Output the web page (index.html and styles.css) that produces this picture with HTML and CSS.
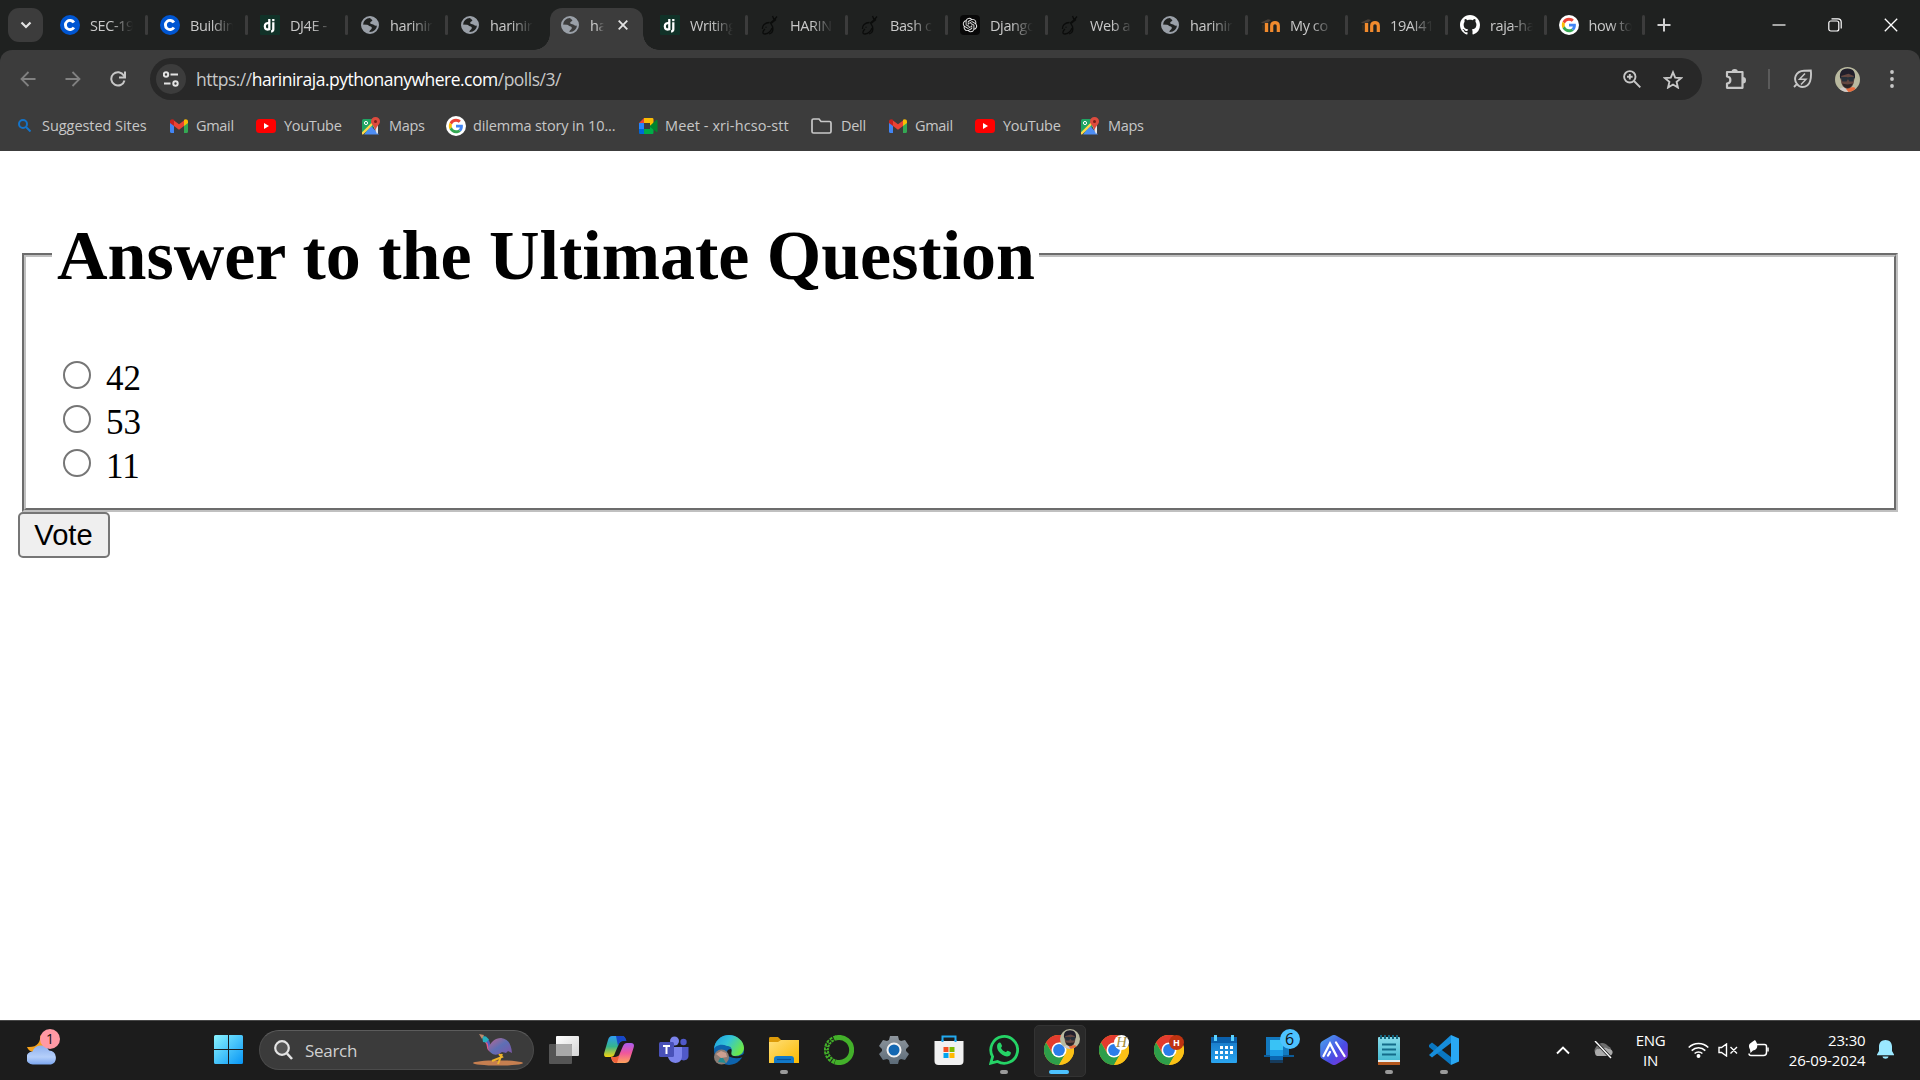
FILE: index.html
```html
<!DOCTYPE html>
<html lang="en">
<head>
<meta charset="utf-8">
<title>Polls</title>
<link rel="stylesheet" href="styles.css">
</head>
<body>
<svg class="sprite" aria-hidden="true">
  <defs>
    <linearGradient id="gWin" x1="0" y1="0" x2="1" y2="1"><stop offset="0" stop-color="#8af4ff"/><stop offset="1" stop-color="#0795f5"/></linearGradient>
    <linearGradient id="gCloud" x1="0" y1="0" x2="0" y2="1"><stop offset="0" stop-color="#8eb0ee"/><stop offset=".6" stop-color="#b5cffa"/><stop offset="1" stop-color="#7ca7f0"/></linearGradient>
    <linearGradient id="gCopA" x1="0" y1="0" x2="0" y2="1"><stop offset="0" stop-color="#2f9cf4"/><stop offset=".5" stop-color="#35b58d"/><stop offset="1" stop-color="#f8d30c"/></linearGradient>
    <linearGradient id="gCopB" x1="0" y1="0" x2="0" y2="1"><stop offset="0" stop-color="#a95cf0"/><stop offset=".5" stop-color="#f0569c"/><stop offset="1" stop-color="#ffa45c"/></linearGradient>
    <linearGradient id="gEdge" x1="0" y1="0" x2="1" y2=".5"><stop offset="0" stop-color="#1c9be0"/><stop offset=".5" stop-color="#33c4d8"/><stop offset="1" stop-color="#6be74a"/></linearGradient>
    <linearGradient id="gFold" x1="0" y1="0" x2="1" y2="1"><stop offset="0" stop-color="#ffdf79"/><stop offset="1" stop-color="#fbb900"/></linearGradient>
    <linearGradient id="gHex" x1="0" y1="0" x2="1" y2="1"><stop offset="0" stop-color="#48a8ee"/><stop offset=".6" stop-color="#4b4be4"/><stop offset="1" stop-color="#8a2fd8"/></linearGradient>
    <linearGradient id="gBird" x1="0" y1="0" x2="1" y2="1"><stop offset="0" stop-color="#c0668f"/><stop offset=".5" stop-color="#5d6fb5"/><stop offset="1" stop-color="#8054a6"/></linearGradient>
    <linearGradient id="gNote" x1="0" y1="0" x2="0" y2="1"><stop offset="0" stop-color="#86dbe9"/><stop offset="1" stop-color="#3db6cf"/></linearGradient>
    <linearGradient id="gCal" x1="0" y1="0" x2="0" y2="1"><stop offset="0" stop-color="#1673c2"/><stop offset="1" stop-color="#2aa5f0"/></linearGradient>
    <linearGradient id="gGear" x1="0" y1="0" x2="0" y2="1"><stop offset="0" stop-color="#8e969d"/><stop offset="1" stop-color="#5c6b78"/></linearGradient>
    <linearGradient id="gTask" x1="0" y1="0" x2="1" y2="1"><stop offset="0" stop-color="#fff"/><stop offset="1" stop-color="#d5d5d5"/></linearGradient>
    <linearGradient id="gMoodle" x1="0" y1="0" x2="1" y2="0"><stop offset="0" stop-color="#f18a2d" stop-opacity=".15"/><stop offset="1" stop-color="#f18a2d"/></linearGradient>
  </defs>
  <symbol id="coursera" viewBox="0 0 20 20"><circle cx="10" cy="10" r="10" fill="#0056d2"/><path d="M13.9 7.5A4.6 4.6 0 1 0 13.9 12.5" fill="none" stroke="#fff" stroke-width="2.9"/></symbol>
  <symbol id="django" viewBox="0 0 20 20"><rect width="20" height="20" rx="1" fill="#113228"/><g fill="none" stroke="#fff" stroke-width="2.3"><path d="M9.3 4v10.2C7 15 4.8 14.3 4.8 11.3S7 7.600 9.300 8.400M13.300 7.300v7c0 1.600-.8 2.100-2.200 2.300"/></g><rect x="12.150" y="4" width="2.300" height="2.200" fill="#fff"/></symbol>
  <symbol id="globe" viewBox="0 0 20 20"><circle cx="10" cy="10" r="8" fill="none" stroke="#9aa0a8" stroke-width="2"/><path d="M10.500 1.800C14 1.500 18 5 18.200 9.500c-1 1.500-3.200 1.800-4.200.5-.8-1.200-2.500-.5-3.500-1.300C9.500 7.500 11 6.500 12 6c1-.7-.5-1.700-1.500-2zM2 9.500l5 .2c1.500 0 1.800 1.300 3 1.600 2 .2 2.500 2 1 3.200-1.500.8-1.500 2-2 3.500C5 18 1.500 14 2 9.500z" fill="#9aa0a8"/></symbol>
  <symbol id="doodle" viewBox="0 0 20 20"><g fill="none" stroke="#0b0c0b" stroke-width="1.300"><path d="M9.500 7.500C5 7.500 2 10.500 2.500 14M9 19c3-1 4.500-4 3.500-7.500L10.500 8l4-3.500 2.500-3M14 4.500L12.500 1M11 8.500l5-4M5.500 12l1 .5M12 13c-1 3-4 5.500-7 6-3 0-2.500-3 0-5"/></g></symbol>
  <symbol id="openai" viewBox="0 0 20 20"><rect width="20" height="20" rx="4" fill="#080808"/><g transform="translate(2.800 2.800) scale(.6)"><path fill="#e8e8e8" d="M22.282 9.821a5.985 5.985 0 0 0-.516-4.910 6.046 6.046 0 0 0-6.510-2.900A6.065 6.065 0 0 0 4.981 4.182a5.985 5.985 0 0 0-3.998 2.900 6.046 6.046 0 0 0 .743 7.097 5.980 5.980 0 0 0 .510 4.911 6.051 6.051 0 0 0 6.515 2.900A5.985 5.985 0 0 0 13.260 24a6.056 6.056 0 0 0 5.772-4.206 5.990 5.990 0 0 0 3.997-2.900 6.056 6.056 0 0 0-.747-7.073zM13.260 22.430a4.476 4.476 0 0 1-2.876-1.040l.141-.081 4.779-2.758a.795.795 0 0 0 .392-.681v-6.737l2.020 1.168a.071.071 0 0 1 .038.052v5.583a4.504 4.504 0 0 1-4.494 4.494zM3.600 18.304a4.470 4.470 0 0 1-.535-3.014l.142.085 4.783 2.759a.771.771 0 0 0 .780 0l5.843-3.369v2.332a.080.080 0 0 1-.033.062L9.740 19.950a4.500 4.500 0 0 1-6.140-1.646zM2.340 7.896a4.485 4.485 0 0 1 2.366-1.973V11.600a.766.766 0 0 0 .388.677l5.815 3.355-2.020 1.168a.076.076 0 0 1-.071 0l-4.830-2.786A4.504 4.504 0 0 1 2.340 7.872zm16.597 3.855l-5.833-3.387L15.119 7.200a.076.076 0 0 1 .071 0l4.830 2.791a4.494 4.494 0 0 1-.676 8.105v-5.678a.790.790 0 0 0-.407-.667zm2.010-3.023l-.141-.085-4.774-2.782a.776.776 0 0 0-.785 0L9.409 9.230V6.897a.066.066 0 0 1 .028-.061l4.830-2.787a4.500 4.500 0 0 1 6.680 4.660zm-12.640 4.135l-2.020-1.164a.080.080 0 0 1-.038-.057V6.075a4.500 4.500 0 0 1 7.375-3.453l-.142.080L8.704 5.460a.795.795 0 0 0-.393.681zm1.097-2.365l2.602-1.500 2.607 1.500v2.999l-2.597 1.500-2.607-1.500z"/></g></symbol>
  <symbol id="moodle" viewBox="0 0 20 20"><path d="M3 15.500V10" stroke="#f18a2d" stroke-opacity=".2" stroke-width="1"/><path d="M6.500 17V8" stroke="#f18a2d" stroke-width="3.400"/><path d="M11.700 17v-6.300c0-4.200 6.600-4.200 6.600 0V17" fill="none" stroke="#f18a2d" stroke-width="3.200"/><path d="M1 7.500l7-3.200 3 .7-3 2.500-6 .8z" fill="#4a4039"/></symbol>
  <symbol id="github" viewBox="0 0 16 16"><path fill="#fff" d="M8 0C3.580 0 0 3.580 0 8c0 3.540 2.290 6.530 5.470 7.590.4.070.55-.17.55-.38 0-.19-.01-.82-.01-1.490-2.010.37-2.530-.49-2.690-.94-.09-.23-.48-.94-.82-1.130-.28-.15-.68-.52-.01-.53.63-.01 1.080.58 1.230.82.72 1.210 1.870.87 2.330.66.07-.52.28-.87.51-1.070-1.780-.2-3.640-.89-3.640-3.950 0-.87.31-1.590.82-2.150-.08-.2-.36-1.020.08-2.120 0 0 .67-.21 2.200.82.64-.18 1.320-.27 2-.27s1.360.09 2 .27c1.530-1.040 2.200-.82 2.200-.82.44 1.100.16 1.920.08 2.120.51.56.82 1.270.82 2.150 0 3.070-1.870 3.750-3.650 3.950.29.25.54.73.54 1.480 0 1.070-.01 1.930-.01 2.200 0 .21.15.46.55.38A8.010 8.010 0 0 0 16 8c0-4.420-3.580-8-8-8z"/></symbol>
  <symbol id="google" viewBox="0 0 20 20"><circle cx="10" cy="10" r="10" fill="#fff"/><g transform="translate(2.800 2.800) scale(.3)"><path fill="#EA4335" d="M24 9.500c3.540 0 6.710 1.220 9.210 3.600l6.850-6.850C35.900 2.380 30.470 0 24 0 14.620 0 6.510 5.380 2.560 13.220l7.980 6.190C12.430 13.720 17.740 9.500 24 9.500z"/><path fill="#4285F4" d="M46.980 24.550c0-1.570-.15-3.090-.38-4.550H24v9.020h12.940c-.58 2.960-2.260 5.480-4.780 7.180l7.730 6c4.510-4.180 7.090-10.360 7.090-17.650z"/><path fill="#FBBC05" d="M10.530 28.590c-.48-1.450-.76-2.990-.76-4.590s.27-3.140.76-4.590l-7.980-6.190C.92 16.460 0 20.120 0 24s.92 7.540 2.560 10.780z"/><path fill="#34A853" d="M24 48c6.480 0 11.930-2.130 15.890-5.810l-7.730-6c-2.150 1.450-4.920 2.300-8.160 2.300-6.260 0-11.570-4.220-13.470-9.910l-7.980 6.190C6.510 42.620 14.620 48 24 48z"/></g></symbol>
  <symbol id="gmail" viewBox="0 0 18 14"><path fill="#4285f4" d="M0 2.500V12.700c0 .7.500 1.200 1.200 1.200H4V6z"/><path fill="#34a853" d="M14 6v7.900h2.800c.7 0 1.200-.5 1.200-1.200V2.500z"/><path fill="#ea4335" d="M4 1.500l5 3.700 5-3.700V7L9 10.800 4 7z"/><path fill="#c5221f" d="M0 2.500C0 .2 2.500-.5 4 .8V7L0 4z"/><path fill="#fbbc04" d="M18 2.500C18 .2 15.500-.5 14 .8V7l4-3z"/></symbol>
  <symbol id="youtube" viewBox="0 0 20 14"><rect width="20" height="14" rx="3.500" fill="#f00"/><path d="M8 4v6l5-3z" fill="#fff"/></symbol>
  <symbol id="maps" viewBox="0 0 18 18"><path fill="#1fa463" d="M2 2h10v8l-5 4-7 3V3.500C0 2.500 1 2 2 2z"/><path fill="#4d8df5" d="M9 9l8 8.500H2z"/><path fill="#e4e6e8" d="M11 8l5-1v9l-1 1z"/><path d="M0 17L13 4" stroke="#ffd84a" stroke-width="2.400"/><circle cx="4" cy="6" r="1.600" fill="none" stroke="#fff"/><path fill="#dd4b3e" d="M13.500 0C16 0 18 1.800 18 4.300c0 3.200-3.500 4.700-4.500 9.200-1-4.500-4.500-6-4.500-9.200C9 1.800 11 0 13.500 0z"/><circle cx="13.500" cy="4.400" r="1.500" fill="#7b1f18"/></symbol>
  <symbol id="meet" viewBox="0 0 19 16"><path fill="#ea4335" d="M0 5l5-5v5z"/><path fill="#fbbc04" d="M5 0h8c1 0 1.500.5 1.500 1.500V6L11 8V5H5z"/><path fill="#2684fc" d="M0 5h5v6H0z"/><path fill="#0066da" d="M0 11h5v5H1.500C.500 16 0 15.500 0 14.500z"/><path fill="#00ac47" d="M5 11h6V8l3.500-3v9.500c0 1-.5 1.500-1.500 1.500H5z"/><path fill="#00832d" d="M11 8l3.500-3.500L17.500 2c.5-.5 1-.2 1 .5v11c0 .7-.5 1-1 .5L11 9z"/></symbol>
  <symbol id="chrome" viewBox="0 0 30 30"><circle cx="15" cy="15" r="15" fill="#fbc116"/><path fill="#e33b2e" d="M2 7.500A15 15 0 0 1 28 7.500H15v7.500L9 19z"/><path fill="#2d9e4a" d="M2 7.500A15 15 0 0 0 15 30l6.500-11.200L15 21 8.500 18.800z"/><path fill="#fbc116" d="M15 7.500h13A15 15 0 0 1 15 30l6.500-11.250z"/><circle cx="15" cy="15" r="7.500" fill="#fff"/><circle cx="15" cy="15" r="5.900" fill="#2b7de9"/></symbol>
  <symbol id="face" viewBox="0 0 26 26"><clipPath id="faceClip"><circle cx="13" cy="13" r="13"/></clipPath><g clip-path="url(#faceClip)"><rect width="26" height="26" fill="#b9b99f"/><path d="M11 26l1-5 8 0 4 5z" fill="#e96b3c"/><path d="M3 26c1-4 4-5 7-5l4 5z" fill="#cfcac7"/><ellipse cx="13" cy="13" rx="7" ry="9.500" fill="#644740"/><path d="M5.500 13C4 5 7 1.500 13 1.500s9 4 7.500 11.500L19 9l-5-2-7 2z" fill="#211f2b"/><path d="M6 10.500h6.500l1 .5 1-.5H20l-1 4.500h-4l-1.500-2.500L12 15H7.500z" fill="#28313a"/><path d="M7.500 17c1 6.500 10 6.500 11 0-2 1.500-9 1.500-11 0z" fill="#2c2526"/></g></symbol>
</svg>

<header class="browser">
  <nav class="tabs">
    <button class="tab-search" aria-label="Search tabs"><svg width="12" height="8" viewBox="0 0 12 8"><path d="M1.500 1.500L6 6l4.500-4.500" fill="none" stroke="#e3e3e3" stroke-width="2.200"/></svg></button>
    <div class="tab"><svg class="fav"><use href="#coursera"/></svg><span>SEC-19</span></div>
    <div class="tab"><svg class="fav"><use href="#coursera"/></svg><span>Buildin</span></div>
    <div class="tab"><svg class="fav"><use href="#django"/></svg><span>DJ4E -</span></div>
    <div class="tab"><svg class="fav"><use href="#globe"/></svg><span>harinir</span></div>
    <div class="tab nosep"><svg class="fav"><use href="#globe"/></svg><span>harinir</span></div>
    <div class="tab active"><svg class="fav"><use href="#globe"/></svg><span>ha</span><svg class="close" viewBox="0 0 10 10"><path d="M.7.7l8.600 8.600M9.300.7L.7 9.300" stroke="#e3e3e3" stroke-width="1.800"/></svg></div>
    <div class="tab"><svg class="fav"><use href="#django"/></svg><span>Writing</span></div>
    <div class="tab"><svg class="fav"><use href="#doodle"/></svg><span>HARIN</span></div>
    <div class="tab"><svg class="fav"><use href="#doodle"/></svg><span>Bash c</span></div>
    <div class="tab"><svg class="fav"><use href="#openai"/></svg><span>Django</span></div>
    <div class="tab"><svg class="fav"><use href="#doodle"/></svg><span>Web a</span></div>
    <div class="tab"><svg class="fav"><use href="#globe"/></svg><span>harinir</span></div>
    <div class="tab"><svg class="fav"><use href="#moodle"/></svg><span>My co</span></div>
    <div class="tab"><svg class="fav"><use href="#moodle"/></svg><span>19AI41</span></div>
    <div class="tab slim"><svg class="fav"><use href="#github"/></svg><span>raja-ha</span></div>
    <div class="tab slim"><svg class="fav"><use href="#google"/></svg><span>how to</span></div>
    <svg class="plus" viewBox="0 0 14 14"><path d="M7 .5v13M.5 7h13" stroke="#d0d0d0" stroke-width="2"/></svg>
    <div class="window-controls">
      <svg width="14" height="14" viewBox="0 0 14 14"><path d="M.5 7h13" stroke="#fff" stroke-width="1.200"/></svg>
      <svg width="14" height="14" viewBox="0 0 14 14" fill="none" stroke="#fff" stroke-width="1.200"><rect x=".8" y="3" width="10" height="10" rx="2"/><path d="M3.500.8H10c2 0 3.200 1.200 3.200 3.200v6.500"/></svg>
      <svg width="14" height="14" viewBox="0 0 14 14"><path d="M.8.8l12.400 12.400M13.200.8L.8 13.200" stroke="#fff" stroke-width="1.300"/></svg>
    </div>
  </nav>

  <div class="toolbar">
    <div class="nav-buttons">
      <svg width="16" height="16" viewBox="0 0 16 16" fill="none" stroke="#818181" stroke-width="1.800"><path d="M15.500 8H1.500M8.500 1L1.500 8l7 7"/></svg>
      <svg width="16" height="16" viewBox="0 0 16 16" fill="none" stroke="#818181" stroke-width="1.800"><path d="M.5 8h14M7.500 1l7 7-7 7"/></svg>
      <svg width="16" height="16" viewBox="0 0 16 16" fill="none" stroke="#c7c7c7" stroke-width="2"><path d="M14.500 9.500A6.700 6.700 0 1 1 13.800 4.500L15 6M15 .5v6H9"/></svg>
    </div>
    <div class="omnibox">
      <span class="site-info"><svg width="16" height="16" viewBox="0 0 16 16" fill="none" stroke="#e3e3e3" stroke-width="2"><circle cx="3" cy="3.500" r="2.200"/><path d="M7.500 3.500H15M1 12.500h6.500"/><circle cx="12.500" cy="12.500" r="2.200"/></svg></span>
      <span class="url">https://<b>hariniraja.pythonanywhere.com</b>/polls/3/</span>
      <svg class="lens" width="18" height="18" viewBox="0 0 18 18" fill="none" stroke="#c7c7c7" stroke-width="1.900"><circle cx="6.800" cy="6.800" r="5.700"/><path d="M11 11l6.300 6.300M6.800 4v5.600M4 6.800h5.600"/></svg>
      <svg width="20" height="19" viewBox="0 0 20 19" fill="none" stroke="#c7c7c7" stroke-width="1.900"><path d="M10 2.300l2.200 5.300 5.800.5-4.400 3.800 1.300 5.600L10 14.500l-4.900 3 1.300-5.600L2 8.100l5.800-.5z"/></svg>
    </div>
    <div class="tool-actions">
      <svg class="puzzle" width="22" height="21" viewBox="0 0 22 21"><path fill="none" stroke="#c7c7c7" stroke-width="2.200" stroke-linejoin="round" d="M2 3h15.500v15.800H2v-4.300c4.500-.3 4.500-6.700 0-7z"/><path fill="#c7c7c7" d="M6.500 3a3.200 3 0 0 1 6.400 0zM18 8a3 3.200 0 0 1 0 6.400z"/></svg>
      <i class="divider"></i>
      <svg class="leaf" width="20" height="20" viewBox="0 0 20 20" fill="none" stroke="#c7c7c7" stroke-width="1.900"><path d="M1 18l3-3C0 10 2.500 2 11 1.700L17.800 1.500C18.500 8 18 18 9.500 18 7 18 5 16.500 4 15"/><path d="M12 4.500L6.500 10.300H13L8 15.500" stroke-width="1.500"/></svg>
      <svg class="avatar"><use href="#face"/></svg>
      <svg class="kebab" width="4" height="18" viewBox="0 0 4 18" fill="#c7c7c7"><circle cx="2" cy="2" r="1.900"/><circle cx="2" cy="9" r="1.900"/><circle cx="2" cy="16" r="1.900"/></svg>
    </div>
  </div>

  <div class="bookmarks">
    <div class="bm b1"><svg width="13" height="13" viewBox="0 0 13 13" fill="none" stroke="#1473c8" stroke-width="2"><circle cx="5" cy="5" r="4"/><path d="M8 8l4.500 4.500"/></svg><span>Suggested Sites</span></div>
    <div class="bm b2"><svg width="18" height="14"><use href="#gmail"/></svg><span>Gmail</span></div>
    <div class="bm b3"><svg width="20" height="14"><use href="#youtube"/></svg><span>YouTube</span></div>
    <div class="bm b4"><svg width="18" height="18"><use href="#maps"/></svg><span>Maps</span></div>
    <div class="bm b5"><svg width="20" height="20"><use href="#google"/></svg><span>dilemma story in 10...</span></div>
    <div class="bm b6"><svg width="19" height="16"><use href="#meet"/></svg><span>Meet - xri-hcso-stt</span></div>
    <div class="bm b7"><svg width="21" height="16" viewBox="0 0 21 16" fill="none" stroke="#c7c7c7" stroke-width="1.700"><path d="M1 13.500V2.500C1 1.500 1.500 1 2.500 1H8l2 2.500h8.500c1 0 1.500.5 1.500 1.500v8.500c0 1-.5 1.500-1.500 1.500h-16C1.500 15 1 14.500 1 13.500z"/></svg><span>Dell</span></div>
    <div class="bm b8"><svg width="18" height="14"><use href="#gmail"/></svg><span>Gmail</span></div>
    <div class="bm b9"><svg width="20" height="14"><use href="#youtube"/></svg><span>YouTube</span></div>
    <div class="bm b10"><svg width="18" height="18"><use href="#maps"/></svg><span>Maps</span></div>
  </div>
</header>

<main class="page">
  <form>
    <fieldset class="poll">
      <legend><h1>Answer to the Ultimate Question</h1></legend>
      <label class="choice"><input type="radio" name="choice"><span>42</span></label>
      <label class="choice"><input type="radio" name="choice"><span>53</span></label>
      <label class="choice"><input type="radio" name="choice"><span>11</span></label>
    </fieldset>
    <button class="vote" type="button">Vote</button>
  </form>
</main>

<footer class="taskbar">
  <div class="weather">
    <svg width="30" height="30" viewBox="0 0 30 30"><path d="M13 0c1 7-3 13-13 12 1 3 4 5 8 5l9-4V5z" fill="#f5a21c"/><path d="M6 29.500a6.500 6.500 0 0 1-.5-13A9 9 0 0 1 22 15.500a7.200 7.200 0 0 1 2 14z" fill="url(#gCloud)"/></svg>
    <span class="badge pink">1</span>
  </div>
  <svg class="start" width="30" height="30" viewBox="0 0 30 30"><path fill="url(#gWin)" d="M1.500 0H14v14H0V1.500Q0 0 1.500 0zM15 0h12.500Q29 0 29 1.500V14H15zM0 15h14v14H1.500Q0 29 0 27.500zM15 15h14v12.500Q29 29 27.500 29H15z"/></svg>
  <div class="search">
    <svg width="19" height="20" viewBox="0 0 19 20" fill="none" stroke="#e4e4e4" stroke-width="2.200"><circle cx="8" cy="8" r="6.800" fill="#555"/><path d="M13 13.500l5 5.500" stroke-width="2.600"/></svg>
    <span>Search</span>
    <svg class="bird" width="50" height="32" viewBox="0 0 50 32"><ellipse cx="25" cy="29" rx="25" ry="2.600" fill="#c67f50"/><path d="M26 20l3 3-10 4M29 20l-4 10" stroke="#efb52b" stroke-width="2" fill="none"/><path d="M13 6c5 2 0 8 6 11" stroke="#4c63c4" stroke-width="3" fill="none"/><path d="M12.500 8c4 3 0 7 5 9" stroke="#e05a8b" stroke-width="1.500" fill="none"/><path d="M15 14C18 8 22 4 28 4c7 1 10 5 11 15l-4-2-2 2-4-1c-5 4-11 4-14-4z" fill="url(#gBird)"/><path d="M9 2l4 .5 3 3-3 3-3-.5z" fill="#25aebd"/><path d="M6 0l5 1-2 4z" fill="#bd8a6b"/></svg>
  </div>
  <div class="apps">
    <div class="app"><svg viewBox="0 0 30 30"><rect x="7" y="1" width="23" height="20" rx="1" fill="url(#gTask)"/><rect y="9" width="23" height="20" rx="1" fill="#555"/><path d="M7 9h15a1 1 0 0 1 1 1v11H7z" fill="#a9a9a9"/></svg></div>
    <div class="app"><svg viewBox="0 0 30 30"><path fill="url(#gCopA)" d="M8 1h9c3 0 4 1 5 5h-3c-3 0-4 2-5 5l-3 7c-1 3-2 4-5 4H3c-3 0-3.500-2-2.500-5L4 5C5 2 6 1 8 1z"/><path fill="#1747c8" d="M12 1h6c2 0 3.500 1 4.500 5H19c-2 0-4 1.500-5 5z"/><path fill="url(#gCopB)" d="M23 8h4c3 0 3.500 2 2.500 5L26 24c-1 3-3 4-5 4h-9c-3 0-4-2-5-6h4c3 0 4-1 5-4l3-7c1-2 2-3 4-3z"/><path fill="#ef6039" d="M7 22h4c3 0 4-1 5-4l-3 10c-3 0-5-2-6-6z"/></svg></div>
    <div class="app"><svg viewBox="0 0 30 30"><circle cx="15.500" cy="6" r="4.500" fill="#7b83eb"/><circle cx="24.500" cy="7" r="3.200" fill="#5059c9"/><path fill="#5059c9" d="M21 12h8.500v9c0 4-5 6-8.500 3z"/><path fill="#7b83eb" d="M9 12h14v9c0 9-12 9-14 1z"/><rect y="7" width="15" height="15" rx="1.500" fill="#4951b8"/><path d="M4 11h7M7.500 11v8" stroke="#fff" stroke-width="2"/></svg></div>
    <div class="app"><svg viewBox="0 0 30 30"><circle cx="15" cy="15" r="15" fill="#0d63ad"/><path fill="url(#gEdge)" d="M0 15C0 6 7 0 15 0s15 6 15 13c0 5-4 8-9 8-4 0-5-2-4-4 2-4-1-6-4-6C7 8 0 11 0 15z"/><path fill="#1c1c1c" d="M17 14c2 2-2 6 3 7 4 1 8-1 11-3l-2 4c-8 3-17 0-16-5 0-2 2-3 4-3z"/><circle cx="7.500" cy="22" r="7.500" fill="#8b7d76"/><path d="M2 19l5-3 5 2 1 4-6 1z" fill="#cc9f90"/><path d="M4 27l2-4h3l3 5z" fill="#238b91"/></svg></div>
    <div class="app running"><svg viewBox="0 0 30 30"><path fill="#dc9a09" d="M0 3.500C0 2.500.5 2 1.500 2H9l4 4-3 6H0z"/><path fill="url(#gFold)" d="M0 7h9l3-2h18v23H0z"/><path fill="#1279c9" d="M5 24a3 3 0 0 1 3-3h14a3 3 0 0 1 3 3v4H5z"/><path d="M8 24.500h14" stroke="#07529a" stroke-width="1.200"/></svg></div>
    <div class="app"><svg viewBox="0 0 30 30" fill="none" stroke="#43b02a"><path d="M12 2.900A12.500 12.500 0 1 1 11 26.800" stroke-width="5"/><path d="M12.500 2.700A12.500 12.500 0 0 0 11.500 27" stroke-width="5" stroke-dasharray="2.800 .9"/><path d="M9 4A12.500 12.500 0 0 0 8 25.500" stroke="#1c1c1c" stroke-width="1.200" stroke-dasharray="2 1.500"/></svg></div>
    <div class="app"><svg viewBox="0 0 30 30"><path fill="url(#gGear)" d="M11 1h8l1 4 2 1 4-1 4 6-3 3v2l3 3-4 6-4-1-2 1-1 4h-8l-1-4-2-1-4 1-4-6 3-3v-2l-3-3 4-6 4 1 2-1z"/><circle cx="15" cy="15" r="6.500" fill="#1267b2" stroke="#f2f2f2" stroke-width="2"/></svg></div>
    <div class="app"><svg viewBox="0 0 30 30"><path d="M8.500 6V1.500h13V6" fill="none" stroke="#22a9ef" stroke-width="2"/><path fill="#f1f1f1" d="M.5 6h29v20a4 4 0 0 1-4 4h-21a4 4 0 0 1-4-4z"/><path d="M8.500 5v2M21.500 5v2" stroke="#22a9ef" stroke-width="2"/><path fill="#f25022" d="M9.500 12h5v5h-5z"/><path fill="#7fba00" d="M15.500 12h5v5h-5z"/><path fill="#00a4ef" d="M9.500 18h5v5h-5z"/><path fill="#ffb900" d="M15.500 18h5v5h-5z"/></svg></div>
    <div class="app running"><svg viewBox="0 0 30 30"><path d="M1.800 28.200l1.800-6.600A13.400 13.400 0 1 1 8.500 26.500z" fill="none" stroke="#25d366" stroke-width="2.800"/><path fill="#25d366" d="M9.500 8c1-1 2-.7 2.500.5l1 2.300c.3.700-1 1.700-1 2.200 1 2 2.500 3.200 4.500 4 .7.300 1.500-1.700 2.300-1.300l2.700 1.400c1 .5 0 3-1 3.700-3 2-8-.5-10.500-4C7.500 13.500 7.500 9.500 9.500 8z"/></svg></div>
    <div class="app current"><svg><use href="#chrome"/></svg><svg class="profile"><use href="#face"/></svg></div>
    <div class="app"><svg><use href="#chrome"/></svg><span class="profile-h white">H</span></div>
    <div class="app"><svg><use href="#chrome"/></svg><span class="profile-h red">H</span></div>
    <div class="app"><svg viewBox="0 0 30 30"><rect x="2" y="2" width="26" height="26" rx="1" fill="url(#gCal)"/><path fill="#0a5fab" d="M2 2h26v6H2z"/><path d="M6.500 0v6M23.500 0v6" stroke="#5bd2ff" stroke-width="3"/><g fill="#fff"><path d="M11 11h3v3h-3zM16 11h3v3h-3zM21 11h3v3h-3zM6 16h3v3H6zM11 16h3v3h-3zM16 16h3v3h-3zM21 16h3v3h-3zM6 21h3v3H6zM11 21h3v3h-3zM16 21h3v3h-3z"/></g></svg></div>
    <div class="app"><svg viewBox="0 0 30 30"><path fill="#1279bf" d="M2 2h23v19H2z"/><path fill="#0c5b98" d="M0 20h30v2H0z"/><path fill="#39c2f5" d="M6 5h13v10H6z"/><path fill="#1a9be5" d="M6 15h13v6H6z"/><path fill="#0b67b2" d="M6 21h13v4H6z"/><path fill="#173b5b" d="M6 25h13v3H6z"/></svg><span class="badge blue">6</span></div>
    <div class="app"><svg viewBox="0 0 30 30"><path fill="url(#gHex)" d="M12.500.700a5 5 0 0 1 5 0l9 5.300c1.500 1 2.300 2 2.300 4v10c0 2-.8 3.200-2.300 4l-9 5.300a5 5 0 0 1-5 0L3.500 24c-1.500-.8-2.300-2-2.300-4V10c0-2 .8-3 2.300-4z"/><path d="M4.500 21L11 8.500l6.500 12.500M17 7.500L25.500 21M9 20.500l2-3.500" fill="none" stroke="#fff" stroke-width="2.300" stroke-linecap="round"/></svg></div>
    <div class="app running"><svg viewBox="0 0 30 30"><rect x="4" y="2" width="22" height="27" rx="1" fill="url(#gNote)"/><path fill="#e4eef0" d="M4 25h22v2H4z"/><path fill="#b3571d" d="M4 27h22v3H4z"/><path d="M8 9.500h14M8 14.500h14M8 19.500h14" stroke="#146c8a" stroke-width="1.800"/><path d="M7 0v4M11 0v4M15 0v4M19 0v4M23 0v4" stroke="#14657e" stroke-width="2"/></svg></div>
    <div class="app running"><svg viewBox="0 0 30 30"><path fill="#0a76c0" d="M0 10l3-2.500L22 22v8L0 12z"/><path fill="#168ddb" d="M0 20L22 0v8L3 22.500z"/><path fill="#29a8f4" d="M22 0l8 3.500v23L22 30z"/></svg></div>
  </div>
  <div class="tray">
    <svg class="up" width="14" height="9" viewBox="0 0 14 9"><path d="M1 7.500L7 1.500l6 6" fill="none" stroke="#fff" stroke-width="1.900"/></svg>
    <svg class="cloud" width="22" height="18" viewBox="0 0 22 18"><path fill="#6d6d6d" d="M5 14A5 5 0 0 1 4 6a7 7 0 0 1 12-1 5 5 0 0 1 1 9z"/><path fill="#aaa" d="M5 15a4 4 0 0 1 0-7c4 1 7-3 11 0 7 0 5 7 1 7z"/><path d="M3 0l16 17" stroke="#1c1c1c" stroke-width="3"/><path d="M3 0l16 17" stroke="#fff" stroke-width="1.400"/></svg>
    <div class="lang">ENG<br>IN</div>
    <svg class="wifi" width="21" height="16" viewBox="0 0 21 16" fill="none" stroke="#fff" stroke-width="1.500"><path d="M.7 5.500a14 14 0 0 1 19.600 0M3.700 8.600a9.600 9.600 0 0 1 13.600 0M6.600 11.500a5.600 5.600 0 0 1 7.800 0"/><circle cx="10.500" cy="14" r="1.200" fill="#fff"/></svg>
    <svg class="mute" width="20" height="14" viewBox="0 0 20 14" fill="none" stroke="#fff" stroke-width="1.400"><path d="M1 4.500h2.500L8.500 1v12L3.500 9.500H1zM12.500 4l6.500 6.500M19 4l-6.500 6.500"/></svg>
    <svg class="battery" width="21" height="17" viewBox="0 0 21 17" fill="none" stroke="#fff" stroke-width="1.500"><path d="M9 4.500h7.500q2 0 2 2v6q0 3-3 3H3q-2 0-2-2"/><path d="M20 7.500v4"/><path d="M7 0C11 5 9.500 10 5 10.500L2.500 13 2 9.500C-1 4 3 3 7 0z" fill="#fff" stroke="none"/></svg>
    <div class="clock">23:30<br>26-09-2024</div>
    <svg class="bell" width="17" height="20" viewBox="0 0 17 20" fill="#9be8ff"><path d="M8.500 0c4 0 6.500 2.800 6.500 6.500V11l2 3.500v.8H0v-.8L2 11V6.500C2 2.800 4.500 0 8.500 0zM5.500 16.500h6c-.5 3-5.500 3-6 0z"/></svg>
  </div>
</footer>
</body>
</html>
```
FILE: styles.css
```css
* { box-sizing: border-box; }

body {
  margin: 0;
  width: 1920px;
  height: 1080px;
  overflow: hidden;
  display: flex;
  flex-direction: column;
  background: #fff;
  font-family: "Open Sans", "Noto Sans", sans-serif;
}

svg { display: block; flex: none; }
.sprite { position: absolute; width: 0; height: 0; }

/* Browser chrome */
.browser { flex: none; height: 151px; background: #1f2120; }

.tabs { display: flex; height: 50px; }
.tab-search {
  flex: none;
  width: 35px;
  height: 34px;
  margin: 8px 5px 0 8px;
  padding: 0;
  border: 0;
  border-radius: 11px;
  background: #3c3c3c;
  display: flex;
  align-items: center;
  justify-content: center;
}
.tab {
  flex: none;
  position: relative;
  width: 100px;
  display: flex;
  align-items: center;
  padding-left: 12px;
  color: #c9c9c9;
  font-size: 14.5px;
  letter-spacing: -.4px;
}
.tab.slim { width: 98.500px; }
.tab::after {
  content: "";
  position: absolute;
  right: 0;
  top: 15px;
  width: 3px;
  height: 20px;
  border-radius: 2px;
  background: #3c3c3c;
}
.tab.nosep::after { display: none; }
.fav { width: 20px; height: 20px; }
.tab span {
  width: 43px;
  margin-left: 10px;
  overflow: hidden;
  white-space: nowrap;
  mask-image: linear-gradient(90deg, #000 50%, transparent 100%);
}
.tab.active::before {
  content: "";
  position: absolute;
  left: 2px;
  top: 8px;
  width: 93px;
  height: 42px;
  border-radius: 12px 12px 0 0;
  background: #3c3c3c;
}
.tab.active::after {
  left: -14px;
  right: auto;
  top: 34px;
  width: 125px;
  height: 16px;
  border-radius: 0;
  background:
    radial-gradient(circle at 0 0, transparent 15.500px, #3c3c3c 16px) left / 16px 16px no-repeat,
    radial-gradient(circle at 100% 0, transparent 15.500px, #3c3c3c 16px) right / 16px 16px no-repeat;
}
.tab.active > * { position: relative; z-index: 1; }
.tab.active span { width: 14px; }
.close { width: 10px; height: 10px; margin-left: 14px; }
.plus { width: 14px; height: 14px; margin: 18px 0 0 12px; }
.window-controls {
  display: flex;
  align-items: center;
  gap: 42px;
  margin-left: auto;
  padding: 0 22px 1px 0;
}

.toolbar {
  display: flex;
  height: 58px;
  padding-top: 8px;
  background: #3c3c3c;
  border-radius: 12px 12px 0 0;
}
.nav-buttons { display: flex; height: 42px; width: 150px; padding-left: 20px; gap: 29px; align-items: center; }
.omnibox {
  width: 1552px;
  height: 42px;
  border-radius: 21px;
  background: #282828;
  display: flex;
  align-items: center;
  padding: 0 19px 0 6px;
}
.site-info {
  width: 30px;
  height: 30px;
  border-radius: 50%;
  background: #3c3c3c;
  display: flex;
  align-items: center;
  justify-content: center;
}
.url { margin-left: 10px; color: #c7c7c7; font-size: 17.5px; letter-spacing: -.5px; white-space: nowrap; }
.url b { color: #fff; font-weight: 400; }
.lens { margin: 0 22px 0 auto; }
.tool-actions { display: flex; align-items: center; height: 42px; }
.puzzle { margin-left: 23px; }
.divider { width: 2px; height: 20px; margin: 0 23px 0 21px; background: #5b5b5b; }
.avatar { width: 25px; height: 25px; margin: 0 30px 0 22px; }

.bookmarks {
  display: flex;
  height: 43px;
  align-items: center;
  padding: 0 0 8px 18px;
  background: #3c3c3c;
  color: #c7c7c7;
  font-size: 14.5px;
  letter-spacing: -.3px;
}
.bm { flex: none; display: flex; align-items: center; height: 30px; white-space: nowrap; }
.bm svg { margin-right: 8px; }
.b1 { width: 152px; letter-spacing: -.05px; }
.b1 svg { margin-right: 11px; }
.b2 { width: 86px; }
.b3 { width: 106px; }
.b4 { width: 84px; }
.b5 { width: 193px; letter-spacing: -.12px; }
.b5 svg { margin-right: 7px; }
.b6 { width: 172px; letter-spacing: .1px; }
.b7 { width: 78px; }
.b8 { width: 86px; }
.b9 { width: 106px; }
.b6 svg { margin-right: 7px; }
.b7 svg, .b4 svg, .b10 svg { margin-right: 9px; }

/* Poll page */
.page { flex: 1; padding: 0 17.500px; font-family: "Liberation Serif", "Times New Roman", serif; color: #000; }
.poll {
  height: 298px;
  margin: 63px 4.500px 0;
  padding: 0 26px;
  border: 4px groove #c0c0c0;
}
.poll legend { margin: 0; padding: 0 4px 0 5px; }
.poll h1 {
  margin: 0;
  height: 82px;
  padding-top: 1px;
  font-size: 70px;
  line-height: 82px;
  letter-spacing: -.02px;
  white-space: nowrap;
}
.choice { display: flex; align-items: center; height: 44px; font-size: 35px; line-height: 40px; }
.choice span { padding-top: 5px; }
.poll legend + .choice { margin-top: 58px; }
.choice input {
  appearance: none;
  flex: none;
  width: 28px;
  height: 28px;
  margin: 0 15px 2px 11px;
  border: 2px solid #767676;
  border-radius: 50%;
  background: #fff;
}
.vote {
  display: block;
  width: 92px;
  height: 46px;
  padding: 0;
  border: 2px solid #767676;
  border-radius: 5px;
  background: #efefef;
  color: #000;
  font: 29.170px/42px "Liberation Sans", Arial, sans-serif;
}

/* Taskbar */
.taskbar {
  flex: none;
  display: flex;
  align-items: center;
  height: 60px;
  padding-bottom: 1px;
  border-top: 1px solid #474747;
  background: #1c1c1c;
  color: #fff;
}
.weather { position: relative; width: 30px; height: 30px; margin: 0 157px 0 27px; }
.badge {
  position: absolute;
  width: 20px;
  height: 20px;
  border-radius: 50%;
  color: #111;
  font-size: 14px;
  line-height: 20px;
  text-align: center;
}
.badge.pink { left: 13px; top: -6px; background: #ff99a4; }
.badge.blue { left: 28px; top: 8px; background: #4cc2ff; font-size: 16px; }
.start { margin-right: 15px; }
.search {
  width: 275px;
  height: 40px;
  border: 1px solid #4b4b4b;
  border-top-color: #5c5c5c;
  border-radius: 21px;
  background: #3b3b3b;
  display: flex;
  align-items: center;
  padding-left: 14px;
  color: #d0d0d0;
  font-size: 17px;
  letter-spacing: -.3px;
}
.search span { margin-left: 12px; }
.bird { margin: 0 10px 0 auto; }
.apps { display: flex; height: 58px; margin-left: 2.500px; }
.app { position: relative; width: 55px; height: 58px; display: flex; align-items: center; justify-content: center; }
.app > svg { width: 30px; height: 30px; }
.app.running::after, .app.current::after {
  content: "";
  position: absolute;
  left: 23.500px;
  top: 49px;
  width: 8px;
  height: 4px;
  border-radius: 2px;
  background: #9a9a9a;
}
.app.current::before {
  content: "";
  position: absolute;
  left: 2.500px;
  top: 4px;
  width: 50px;
  height: 50px;
  border: 1px solid #333;
  border-radius: 5px;
  background: #292929;
}
.app.current > svg { position: relative; }
.app.current::after { left: 17.500px; width: 20px; background: #4cc2ff; }
.app.current .profile { position: absolute; left: 28px; top: 8px; width: 20px; height: 20px; }
.profile-h {
  position: absolute;
  left: 27.500px;
  top: 14px;
  width: 15px;
  height: 15px;
  border-radius: 50%;
  font-size: 9px;
  font-weight: 700;
  line-height: 15px;
  text-align: center;
}
.profile-h.white { background: #fff; color: #a58c3c; font: italic 15px/15px "Liberation Serif", serif; }
.profile-h.red { background: #bf3310; }

.tray { display: flex; align-items: center; flex: 1; margin-left: 84px; }
.cloud { margin-left: 22px; }
.lang { width: 40px; margin-left: 17px; text-align: center; }
.lang, .clock { font-size: 15px; line-height: 20px; letter-spacing: -.35px; white-space: nowrap; }
.wifi { margin-left: 17px; }
.mute { margin-left: 9px; }
.battery { margin: 0 0 3px 10px; }
.clock { width: 82px; margin-left: 15px; text-align: right; letter-spacing: -.15px; }
.bell { margin-left: 11px; }
```
